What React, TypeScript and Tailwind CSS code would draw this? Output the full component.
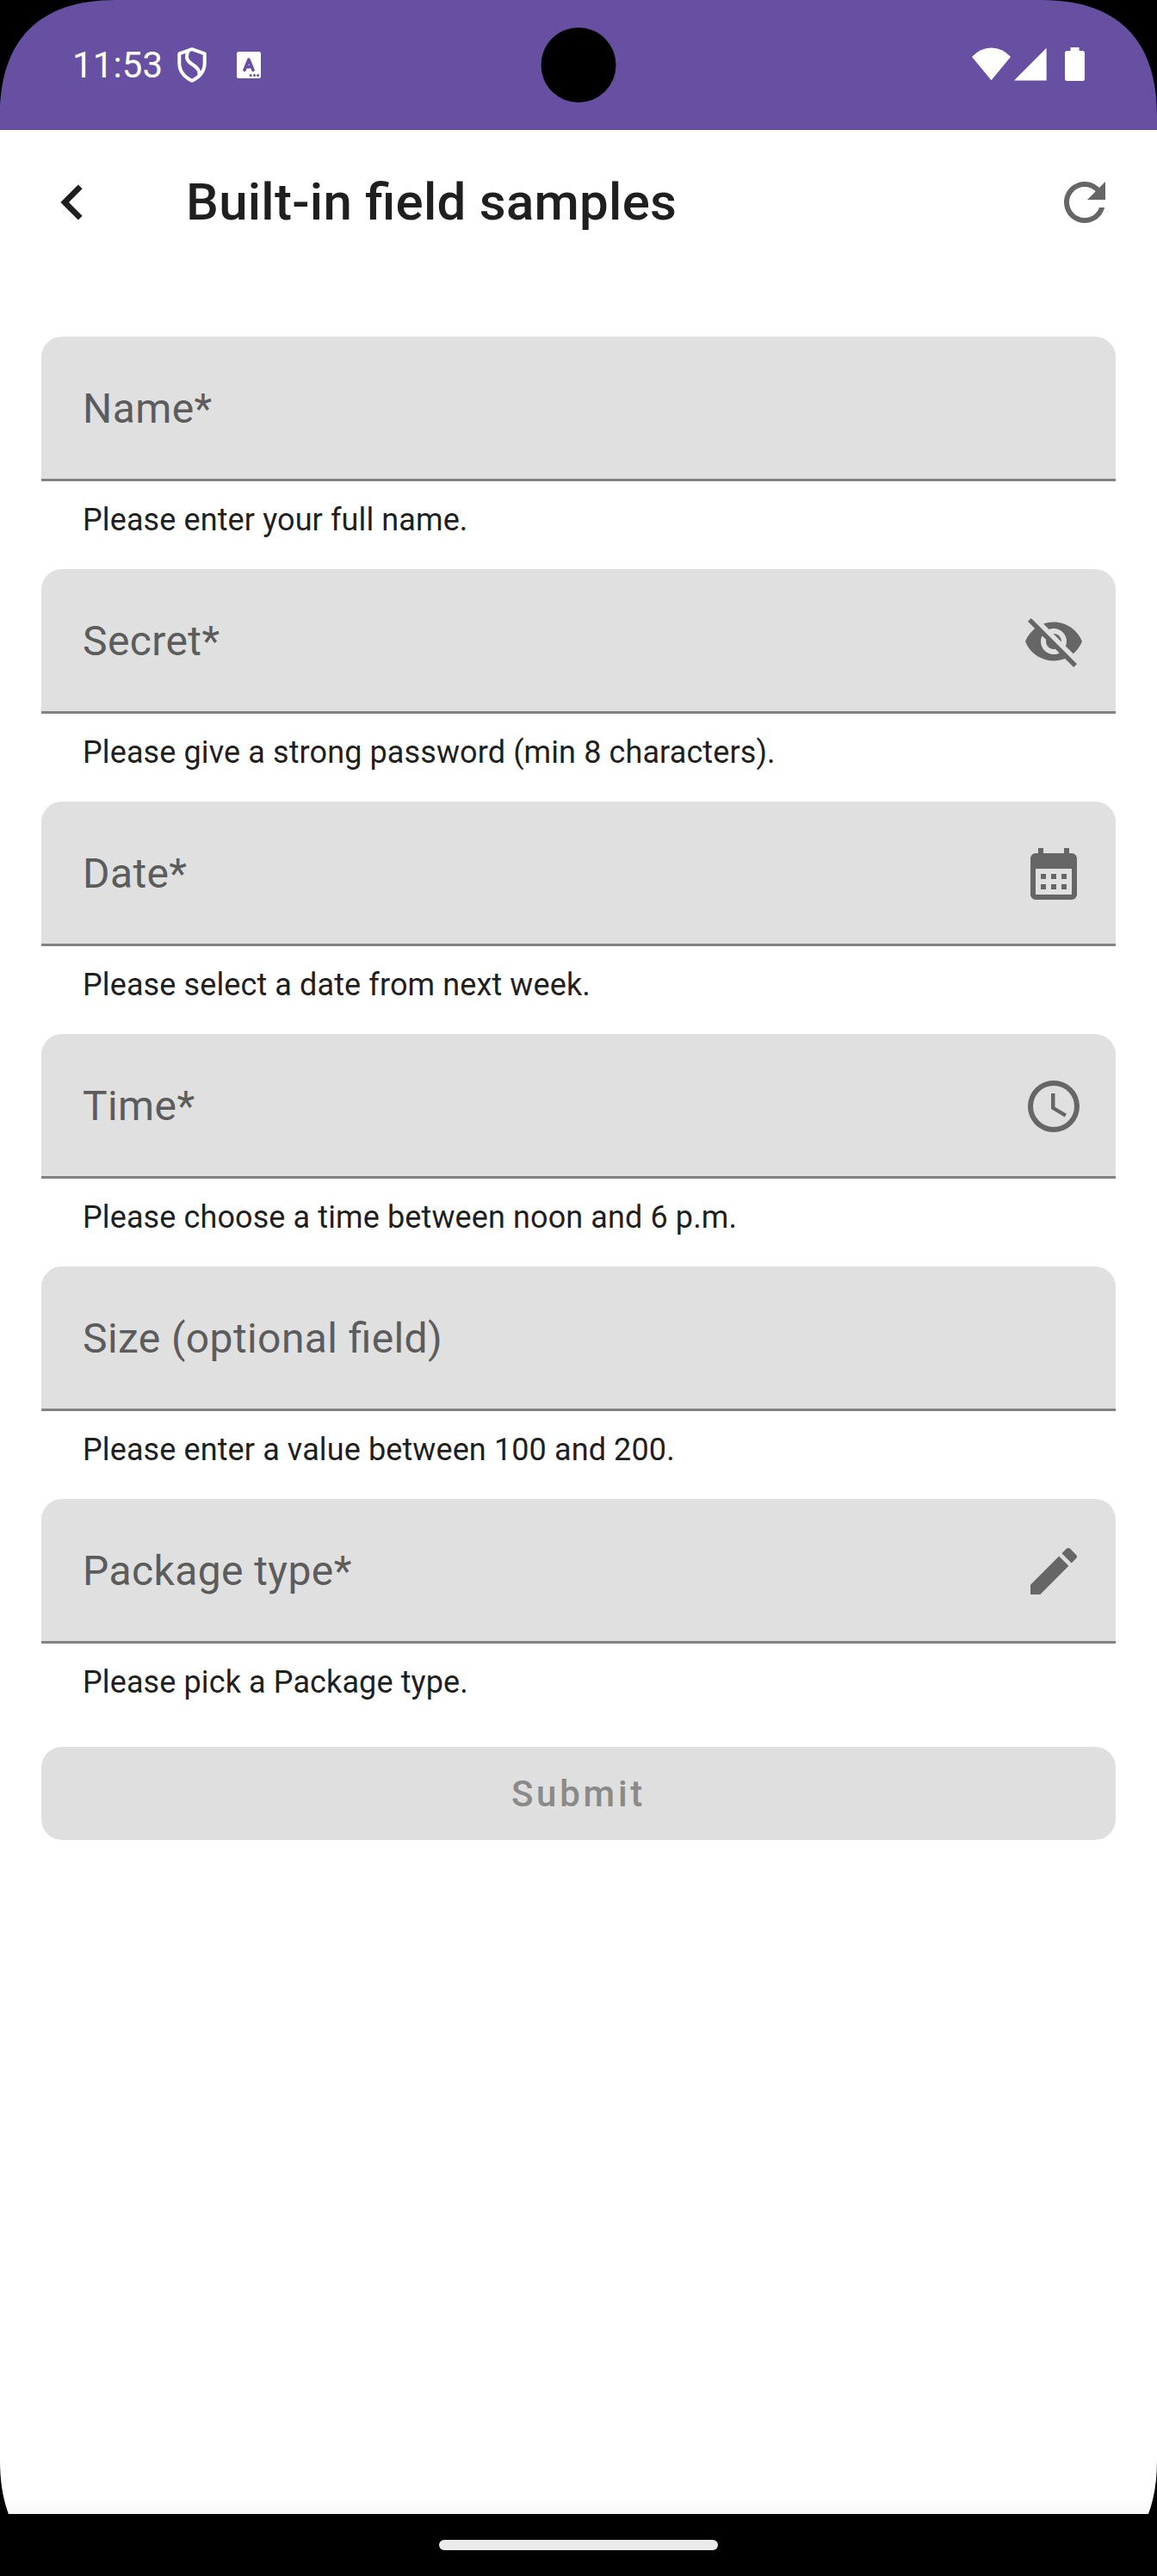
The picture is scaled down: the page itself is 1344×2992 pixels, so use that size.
import type { ReactNode } from "react";

type Field = { label: string; helper: string; icon?: ReactNode };

function Icon({ d, className = "size-[72px]" }: { d: string; className?: string }) {
  return (
    <svg viewBox="0 0 24 24" className={className} fill="currentColor" aria-hidden="true">
      <path fillRule="evenodd" d={d} />
    </svg>
  );
}

const eyeOff =
  "M12 7c2.76 0 5 2.24 5 5 0 .65-.13 1.26-.36 1.83l2.92 2.92c1.51-1.26 2.7-2.89 3.43-4.75-1.73-4.39-6-7.5-11-7.5-1.4 0-2.74.25-3.98.7l2.16 2.16C10.74 7.13 11.35 7 12 7zM2 4.27l2.28 2.28.46.46C3.08 8.3 1.78 10.02 1 12c1.73 4.39 6 7.5 11 7.5 1.55 0 3.03-.3 4.38-.84l.42.42L19.73 22 21 20.73 3.27 3 2 4.27zM7.53 9.8l1.55 1.55c-.05.21-.08.43-.08.65 0 1.66 1.34 3 3 3 .22 0 .44-.03.65-.08l1.55 1.55c-.67.33-1.41.53-2.2.53-2.76 0-5-2.24-5-5 0-.79.2-1.53.53-2.2zm4.31-.78l3.15 3.15.02-.16c0-1.66-1.34-3-3-3l-.17.01z";
const calendar =
  "M6 2h2v2h8V2h2v2h1a2 2 0 0 1 2 2v14a2 2 0 0 1-2 2H5a2 2 0 0 1-2-2V6a2 2 0 0 1 2-2h1V2zM5 10v10h14V10H5zM7 12h2v2H7zM11 12h2v2h-2zM15 12h2v2h-2zM7 16h2v2H7zM11 16h2v2h-2zM15 16h2v2h-2z";
const clock =
  "M12 20A8 8 0 0 0 20 12A8 8 0 0 0 12 4A8 8 0 0 0 4 12A8 8 0 0 0 12 20M12 2A10 10 0 0 1 22 12A10 10 0 0 1 12 22C6.47 22 2 17.5 2 12A10 10 0 0 1 12 2M12.5 7V12.25L17 14.92L16.25 16.15L11 13V7H12.5Z";
const pencil =
  "M3 17.25V21h3.75L17.81 9.94l-3.75-3.75L3 17.25zM20.71 7.04c.39-.39.39-1.02 0-1.41l-2.34-2.34c-.39-.39-1.02-.39-1.41 0l-1.83 1.83 3.75 3.75 1.83-1.83z";
const refresh =
  "M17.65 6.35C16.2 4.9 14.21 4 12 4c-4.42 0-7.99 3.58-7.99 8s3.57 8 7.99 8c3.73 0 6.84-2.55 7.73-6h-2.08c-.82 2.33-3.04 4-5.65 4-3.31 0-6-2.69-6-6s2.69-6 6-6c1.66 0 3.14.69 4.22 1.78L13 11h7V4l-2.35 2.35z";
const chevron = "M15.41 16.58L10.83 12L15.41 7.41L14 6L8 12L14 18Z";

const fields: Field[] = [
  { label: "Name*", helper: "Please enter your full name." },
  { label: "Secret*", helper: "Please give a strong password (min 8 characters).", icon: <Icon d={eyeOff} /> },
  { label: "Date*", helper: "Please select a date from next week.", icon: <Icon d={calendar} /> },
  { label: "Time*", helper: "Please choose a time between noon and 6 p.m.", icon: <Icon d={clock} /> },
  { label: "Size (optional field)", helper: "Please enter a value between 100 and 200." },
  { label: "Package type*", helper: "Please pick a Package type.", icon: <Icon d={pencil} /> },
];

function StatusBar() {
  return (
    <header className="relative flex h-[151px] shrink-0 items-start bg-[#6750a2] pl-[84px] pr-[84px] text-white">
      <span className="mt-[51px] w-[120px] whitespace-nowrap text-[42px] leading-[50px] tracking-[0.1px]">11:53</span>
      <svg className="ml-[2px] mt-[55px] h-[41px] w-[34px]" viewBox="0 0 34 41" fill="none" stroke="white" strokeWidth="4" strokeLinejoin="round" aria-hidden="true">
        <path d="M17 2.2L31.7 7.3V18C31.7 27.5 26 34.5 17 38.8C8 34.5 2.3 27.5 2.3 18V7.3Z" />
        <path d="M12.5 4.5C9.5 12 11 15.5 17 19.5C23.5 23.8 26 26.5 25.5 32" />
      </svg>
      <svg className="ml-[35px] mt-[60px] h-[31px] w-[28px]" viewBox="0 0 28 31" aria-hidden="true">
        <rect width="28" height="31" rx="2.5" fill="white" />
        <path d="M9 21.3L14 9.2L19 21.3M10.7 17.6H17.3" fill="none" stroke="#6750a2" strokeWidth="3.6" strokeLinecap="round" strokeLinejoin="round" />
        <g fill="#6750a2">
          <circle cx="16.2" cy="27.6" r="1.5" />
          <circle cx="20.5" cy="27.6" r="1.5" />
          <circle cx="24.7" cy="27.6" r="1.5" />
        </g>
      </svg>
      <div className="ml-auto mt-[55px] flex items-start">
        <svg className="h-[39px] w-[45px]" viewBox="0 0 45 39" fill="white" aria-hidden="true">
          <path d="M0 11Q9.5 .4 22.5 .4T45 11L22.5 38.2Z" />
        </svg>
        <svg className="ml-[4px] h-[39px] w-[38px]" viewBox="0 0 38 39" fill="white" aria-hidden="true">
          <path d="M0 38.5L37.6 .7V38.5Z" />
        </svg>
        <svg className="ml-[21px] h-[39px] w-[23px]" viewBox="0 0 23 39" fill="white" aria-hidden="true">
          <path d="M6.6 0H16.6V4H20.5Q23 4 23 6.5V36.5Q23 39 20.5 39H2.5Q0 39 0 36.5V6.5Q0 4 2.5 4H6.6Z" />
        </svg>
      </div>
      <div className="absolute left-1/2 top-[31.5px] size-[87px] -translate-x-1/2 rounded-full bg-black" />
    </header>
  );
}

function FieldRow({ label, helper, icon }: Field) {
  return (
    <div className="h-[270px]">
      <div className="flex h-[168px] items-center justify-between rounded-t-[24px] bg-[#e0e0e0] pl-[48px] pr-[36px] text-[#666666] shadow-[inset_0_-3px_0_#828282]">
        <span className="whitespace-nowrap text-[48px] leading-[72px] tracking-[0.4px] text-[#5c5c5c] [font-feature-settings:'liga'_1]">{label}</span>
        {icon}
      </div>
      <p className="whitespace-nowrap pl-[48px] pt-[21px] text-[36px] leading-[48px] tracking-[0.11px] text-[#1f1f1f]">{helper}</p>
    </div>
  );
}

function Corner({ className }: { className: string }) {
  return (
    <svg className={className} viewBox="0 0 134 134" aria-hidden="true">
      <path d="M0 0H134C46 0 0 46 0 134Z" fill="black" />
    </svg>
  );
}

export default function App() {
  return (
    <div className="relative flex h-[2992px] w-[1344px] flex-col overflow-hidden bg-white font-['Roboto',sans-serif]">
      <StatusBar />
      <nav className="flex h-[168px] shrink-0 items-center pl-[43px] pr-[48px]">
        <button aria-label="Back" className="text-[#1f1f1f]">
          <Icon d={chevron} className="size-[82px]" />
        </button>
        <h1 className="ml-[91px] whitespace-nowrap text-[60px] font-medium leading-[72px] tracking-[0.27px] text-[#1f1f1f] [font-feature-settings:'liga'_1]">Built-in field samples</h1>
        <button aria-label="Refresh" className="ml-auto text-[#666666]">
          <Icon d={refresh} />
        </button>
      </nav>
      <main className="flex flex-1 flex-col px-[48px] pt-[72px]">
        {fields.map((f) => (
          <FieldRow key={f.label} {...f} />
        ))}
        <button className="mt-[18px] h-[108px] rounded-[24px] bg-[#dfdfdf] pt-[2px] text-[42px] font-medium leading-[48px] tracking-[3.75px] text-[#8a8a8a]">Submit</button>
      </main>
      <div className="h-[18px] shrink-0 bg-linear-to-b from-white to-[#f7f7f7]" />
      <footer className="flex h-[72px] shrink-0 justify-center bg-black pt-[30px]">
        <div className="h-[12px] w-[324px] rounded-full bg-[#ebebeb]" />
      </footer>
      <Corner className="absolute left-0 top-0 size-[134px]" />
      <Corner className="absolute right-0 top-0 size-[134px] rotate-90" />
      <Corner className="absolute bottom-0 left-0 size-[134px] -rotate-90" />
      <Corner className="absolute bottom-0 right-0 size-[134px] rotate-180" />
    </div>
  );
}
